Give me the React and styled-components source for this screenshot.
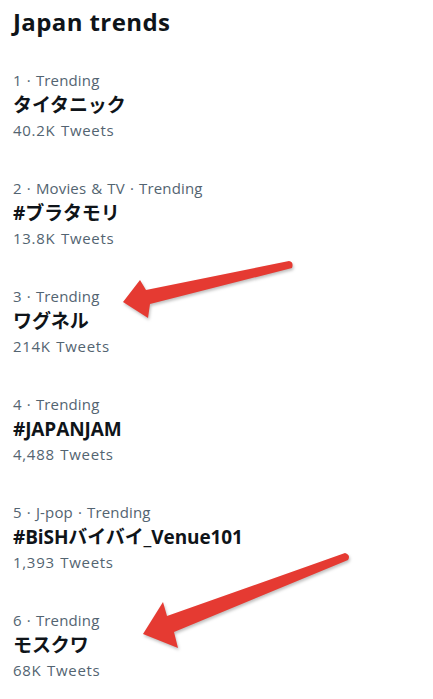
import React from "react";
import styled, { createGlobalStyle } from "styled-components";

const GlobalStyle = createGlobalStyle`
  html, body {
    margin: 0;
    padding: 0;
    background: #ffffff;
  }
  body {
    font-family: "Open Sans", "Noto Sans CJK JP", sans-serif;
  }
`;

const trends = [
  { rank: 1, context: "Trending", name: "タイタニック", count: "40.2K Tweets" },
  { rank: 2, context: "Movies & TV · Trending", name: "#ブラタモリ", count: "13.8K Tweets" },
  { rank: 3, context: "Trending", name: "ワグネル", count: "214K Tweets" },
  { rank: 4, context: "Trending", name: "#JAPANJAM", count: "4,488 Tweets" },
  { rank: 5, context: "J-pop · Trending", name: "#BiSHバイバイ_Venue101", count: "1,393 Tweets" },
  { rank: 6, context: "Trending", name: "モスクワ", count: "68K Tweets" },
];

export default function App() {
  return (
    <Page>
      <GlobalStyle />
      <Title>Japan trends</Title>
      <List>
        {trends.map((t) => (
          <Trend key={t.rank}>
            <Meta>
              {t.rank} · {t.context}
            </Meta>
            <Name>{t.name}</Name>
            <Meta $wide>{t.count}</Meta>
          </Trend>
        ))}
      </List>
      <Arrows viewBox="0 0 433 699" width="433" height="699">
        <path d="M123 302 L140 280 L146 290 L289 261 Q294 262 292 268 L150 304 L148 318 Z" />
        <path d="M143 634 L163 602 L167 616 L345 553 Q351 555 348 560 L174 632 L178 648 Z" />
      </Arrows>
    </Page>
  );
}

const Page = styled.div`
  position: relative;
  width: 433px;
  height: 699px;
  overflow: hidden;
  padding: 7px 13px 0;
  box-sizing: border-box;
  color: #0f1419;
`;

const Title = styled.h1`
  margin: 0;
  font-family: "Open Sans", sans-serif;
  font-size: 24px;
  font-weight: 700;
  line-height: 30px;
  letter-spacing: 0.4px;
`;

const List = styled.div`
  display: flex;
  flex-direction: column;
  padding-top: 14px;
`;

const Trend = styled.div`
  display: flex;
  flex-direction: column;
  padding: 17px 0;
`;

const Meta = styled.div`
  font-size: 15px;
  line-height: 24px;
  color: #536471;
  word-spacing: 1px;
  letter-spacing: ${(p) => (p.$wide ? "0.7px" : "0.15px")};
`;

const Name = styled.div`
  font-size: 19px;
  font-weight: 700;
  line-height: 26px;
  color: #0f1419;
  letter-spacing: -0.1px;
`;

const Arrows = styled.svg`
  position: absolute;
  top: 0;
  left: 0;
  pointer-events: none;
  filter: drop-shadow(1px 2px 1.5px rgba(0, 0, 0, 0.25));

  path {
    fill: #e53a32;
  }
`;
